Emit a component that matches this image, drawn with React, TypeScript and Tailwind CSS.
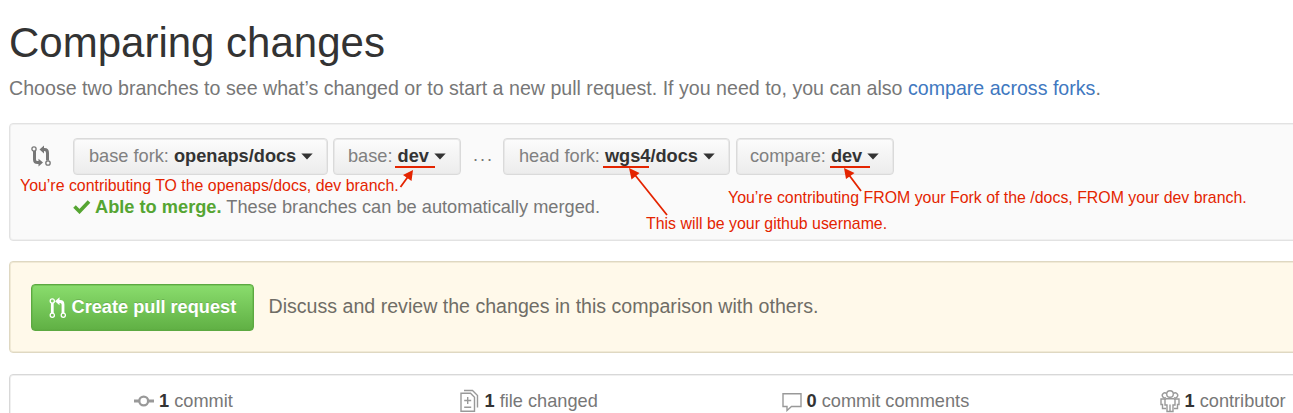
import React from "react";

const Caret = () => (
  <svg className="ml-[5px] shrink-0" width="12" height="7" viewBox="0 0 12 7">
    <path d="M.3.6h11.400L6 6.500z" fill="#333" />
  </svg>
);

function Pick({ label, value, className }: { label: string; value: string; className: string }) {
  return (
    <button
      className={`flex h-[37px] shrink-0 items-center whitespace-nowrap rounded-[4px] border border-[#dadada] bg-gradient-to-b from-[#fcfcfc] to-[#ececec] text-[18.200px] leading-none text-[#808080] shadow-[inset_0_0_0_1px_#e8e8e8] ${className}`}
    >
      <span>
        {label} <b className="text-[#333]">{value}</b>
      </span>
      <Caret />
    </button>
  );
}

const CompareIcon = () => (
  <svg width="20" height="23" viewBox="0 0 20 23" fill="none" stroke="#777" className="shrink-0">
    <circle cx="3" cy="4" r="2.100" strokeWidth="1.300" />
    <path d="M3.500 6v8.500q0 3 3 3H8M16.500 15.500V8q0-3.500-3-3.500H12.500" strokeWidth="3" />
    <path d="M7.500 13.700v7.800l4.500-3.900zM13 .6v7.800L8.500 4.500z" fill="#777" stroke="none" />
    <circle cx="17" cy="18" r="2.200" strokeWidth="1.300" />
  </svg>
);

const PullIcon = () => (
  <svg width="17" height="22" viewBox="0 0 17 22" fill="none" stroke="#fff" className="shrink-0">
    <circle cx="3.300" cy="4" r="2.100" strokeWidth="1.300" />
    <circle cx="3.300" cy="18.300" r="2.100" strokeWidth="1.300" />
    <circle cx="14.300" cy="18.300" r="2.100" strokeWidth="1.300" />
    <path d="M3.300 6v10.500M14 16.500V7.500q0-3-3-3H10" strokeWidth="2.800" />
    <path d="M10.500.3v8L6 4.300z" fill="#fff" stroke="none" />
  </svg>
);

export default function App() {
  return (
    <main className="relative h-[413px] w-[1293px] overflow-hidden bg-white pl-[9px] font-['Liberation_Sans',sans-serif]">
      <h1 className="pt-[19px] text-[42px] leading-[48px] text-[#333]">Comparing changes</h1>
      <p className="mt-[8px] whitespace-nowrap text-[19.610px] leading-[26px] text-[#777]">
        Choose two branches to see what’s changed or to start a new pull request. If you need to, you can also{" "}
        <a className="text-[#4078c0]">compare across forks</a>.
      </p>

      <section className="mt-[22px] h-[118px] w-[1310px] rounded-[4px] border border-[#e2e2e2] bg-[#fafafa] px-px pt-[14px] shadow-[inset_0_0_0_1px_#f0f0f0]">
        <div className="flex items-center">
          <div className="w-[62px] shrink-0 pl-[20px]"><CompareIcon /></div>
          <Pick label="base fork:" value="openaps/docs" className="w-[255px] pl-[15px]" />
          <Pick label="base:" value="dev" className="ml-[5px] w-[128px] pl-[14px]" />
          <span className="w-[42px] pb-[2px] pl-[12px] text-[18.200px] tracking-[2px] text-[#777]">...</span>
          <Pick label="head fork:" value="wgs4/docs" className="w-[227px] pl-[15px]" />
          <Pick label="compare:" value="dev" className="ml-[6px] w-[158px] pl-[13px]" />
        </div>
        <div className="ml-[62px] mt-[20px] flex items-center text-[18.230px] leading-[24px] text-[#777]">
          <svg width="18" height="14" viewBox="0 0 18 14" className="mr-[4px]">
            <path d="M1.500 6.500l5 5L16 1.500" fill="none" stroke="#55a532" strokeWidth="3.600" />
          </svg>
          <span><b className="text-[#55a532]">Able to merge.</b> These branches can be automatically merged.</span>
        </div>
      </section>

      <section className="mt-[20px] flex h-[92px] w-[1310px] items-center rounded-[4px] border border-[#dfd8c2] bg-[#fff9ea] pl-[21px] shadow-[inset_0_0_0_1px_#f1ead6]">
        <button className="mt-[1px] flex h-[47px] w-[223px] items-center rounded-[4px] border border-[#5ca941] bg-gradient-to-b from-[#8add6d] to-[#60b044] pl-[17px] text-[18.200px] font-bold text-white shadow-[inset_0_0_0_1px_rgba(92,169,65,0.400)] [text-shadow:0_-1px_0_rgba(0,0,0,0.150)]">
          <PullIcon />
          <span className="ml-[5.500px] whitespace-nowrap">Create pull request</span>
        </button>
        <span className="ml-[14.500px] text-[19.600px] text-[#6f6d66]">Discuss and review the changes in this comparison with others.</span>
      </section>

      <section className="mt-[21px] flex h-[80px] w-[1310px] rounded-[4px] border border-[#d8d8d8] px-px pt-[14px] text-[18.200px] leading-[24px] text-[#777] shadow-[inset_0_0_0_1px_#f0f0f0]">
        <div className="flex h-[24px] w-[326px] shrink-0 items-center pl-[123px]">
          <svg width="20" height="14" viewBox="0 0 20 14" fill="none" stroke="#999" className="mr-[5px]">
            <path d="M0 7h5M14.500 7H20" strokeWidth="2.800" />
            <circle cx="9.700" cy="7" r="4.400" strokeWidth="2.300" />
          </svg>
          <span><b className="text-[#333]">1</b> commit</span>
        </div>
        <div className="flex h-[24px] w-[323px] shrink-0 items-center pl-[123px]">
          <svg width="19" height="24" viewBox="0 0 19 24" fill="none" stroke="#999" strokeWidth="1.400" className="mr-[5.500px]">
            <path d="M1 4.200h9.500l4 4v14H1zM4 1.500h8.500l5 5v12M7.700 8v7M4.200 11.500h7M4.200 18.200h7" />
          </svg>
          <span><b className="text-[#333]">1</b> file changed</span>
        </div>
        <div className="flex h-[24px] w-[378px] shrink-0 items-center pl-[122px]">
          <svg width="20" height="20" viewBox="0 0 20 20" fill="none" stroke="#999" strokeWidth="1.400" className="mr-[4.500px] mt-[2px]">
            <path d="M1 1.700h18v12.800H9.500l-4.500 4v-4H1z" />
          </svg>
          <span><b className="text-[#333]">0</b> commit comments</span>
        </div>
        <div className="flex h-[24px] shrink-0 items-center pl-[122px]">
          <svg width="20" height="24" viewBox="0 0 20 24" fill="none" stroke="#999" strokeWidth="1.400" className="mr-[4.500px]">
            <circle cx="10" cy="5" r="3.300" />
            <path d="M6.500 4.500a2.500 2.500 0 1 0-.5 4M13.500 4.500a2.500 2.500 0 1 1 .5 4" />
            <path d="M6 9.700h8l1 1V16h-2v6.500H7V16H5v-5.300zM5 10H1v5.500h1.500v4H6M15 10h4v5.500h-1.500v4H14M10 15.500v6.500" />
          </svg>
          <span className="whitespace-nowrap"><b className="text-[#333]">1</b> contributor</span>
        </div>
      </section>

      <div className="pointer-events-none absolute inset-0 text-[15.900px] leading-[18px] text-[#e42400]">
        <span className="absolute left-[20px] top-[177px] whitespace-nowrap">You’re contributing TO the openaps/docs, dev branch.</span>
        <span className="absolute left-[646px] top-[215px] whitespace-nowrap">This will be your github username.</span>
        <span className="absolute left-[728px] top-[189px] whitespace-nowrap">You’re contributing FROM your Fork of the /docs, FROM your dev branch.</span>
        <svg className="absolute inset-0" width="1293" height="413" viewBox="0 0 1293 413" fill="#e42400" stroke="#e42400">
          <path d="M395 167h40M603 167h46M830 167h40" strokeWidth="2" />
          <path d="M400.500 187l8-11M667 215l-32-40M861 191l-12-16" strokeWidth="1.800" />
          <path d="M413 170l-1.500 11-8.500-6zM629 168l10.500 5-8 6.500zM844 168l10.500 5-8.500 6z" stroke="none" />
        </svg>
      </div>
    </main>
  );
}
